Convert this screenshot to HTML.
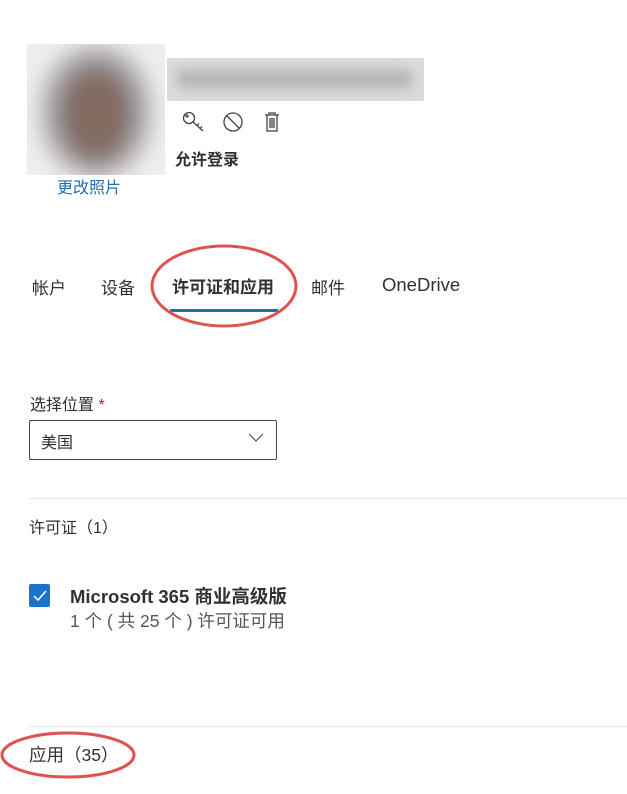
<!DOCTYPE html>
<html><head><meta charset="utf-8"><style>
body{margin:0;width:627px;height:794px;background:#fff;position:relative;overflow:hidden;font-family:"Liberation Sans","Noto Sans CJK SC",sans-serif;color:#323130}
.a{position:absolute;white-space:nowrap}
</style></head><body>
<div class="a" style="left:27px;top:44px;width:138px;height:131px;overflow:hidden;background:#eceaec">
 <div style="position:absolute;left:-10px;top:-10px;width:158px;height:151px;filter:blur(9px);background:radial-gradient(ellipse 40px 56px at 79px 80px,#8a6b5d 0%,#7f6a63 60%,transparent 100%),radial-gradient(ellipse 64px 76px at 79px 78px,#6f6865 0%,#a8a3a6 70%,#eeedf0 100%)"></div>
</div>
<div class="a" style="left:167px;top:58px;width:257px;height:43px;background:#dcdcdc;overflow:hidden"><div style="position:absolute;left:10px;top:12px;width:235px;height:18px;background:#b3b3b3;filter:blur(6px)"></div></div>
<svg class="a" style="left:182px;top:111px" width="110" height="24" viewBox="0 0 110 24" fill="none" stroke="#444" stroke-width="1.3">
 <circle cx="7" cy="7" r="5.5"/><circle cx="5" cy="5" r="1"/><path d="M11 11l10 9M15 14.5l2-2M18 17.5l2-2"/>
 <circle cx="51" cy="11" r="9"/><path d="M45 5l12 12"/>
 <path d="M83 4h14M87 4V2h6v2M85 4v16h10V4M88 7v10M90 7v10M92 7v10"/>
</svg>
<div class="a" style="left:175px;top:146px;font-size:16px;font-weight:bold">允许登录</div>
<div class="a" style="left:57px;top:174px;font-size:16px;color:#1f6fb5">更改照片</div>
<div class="a" style="left:32px;top:274px;font-size:17px">帐户</div>
<div class="a" style="left:101px;top:274px;font-size:17px">设备</div>
<div class="a" style="left:172px;top:273px;font-size:17px;font-weight:bold">许可证和应用</div>
<div class="a" style="left:311px;top:274px;font-size:17px">邮件</div>
<div class="a" style="left:382px;top:274px;font-size:18.5px">OneDrive</div>
<div class="a" style="left:170px;top:309px;width:108px;height:3px;background:#1f6fb5"></div>
<svg class="a" style="left:140px;top:236px" width="170" height="104"><ellipse cx="84" cy="50" rx="72" ry="40" fill="none" stroke="#e05252" stroke-width="3"/></svg>
<div class="a" style="left:30px;top:391px;font-size:16px">选择位置 <span style="color:#a4262c">*</span></div>
<div class="a" style="left:29px;top:420px;width:246px;height:38px;border:1px solid #444;border-radius:2px;box-sizing:content-box"></div>
<div class="a" style="left:41px;top:429px;font-size:16px">美国</div>
<svg class="a" style="left:248px;top:433px" width="16" height="10"><path d="M1 1l7 7 7-7" fill="none" stroke="#555" stroke-width="1.2"/></svg>
<div class="a" style="left:29px;top:498px;width:598px;height:1px;background:#e5e5e5"></div>
<div class="a" style="left:29px;top:514px;font-size:16px">许可证（1）</div>
<div class="a" style="left:29px;top:584px;width:21px;height:23px;background:#1b73d0;border-radius:2px"></div>
<svg class="a" style="left:31px;top:588px" width="18" height="16"><path d="M3 8l4 4 8-9" fill="none" stroke="#fff" stroke-width="1.5"/></svg>
<div class="a" style="left:70px;top:583px;font-size:18.5px;font-weight:bold">Microsoft 365 商业高级版</div>
<div class="a" style="left:70px;top:608px;font-size:17.5px;color:#555">1 个 ( 共 25 个 ) 许可证可用</div>
<div class="a" style="left:29px;top:726px;width:598px;height:1px;background:#e5e5e5"></div>
<div class="a" style="left:29px;top:742px;font-size:17.5px">应用（35）</div>
<svg class="a" style="left:0px;top:728px" width="140" height="60"><ellipse cx="68" cy="27" rx="66" ry="22" fill="none" stroke="#e05252" stroke-width="3"/></svg>
</body></html>
